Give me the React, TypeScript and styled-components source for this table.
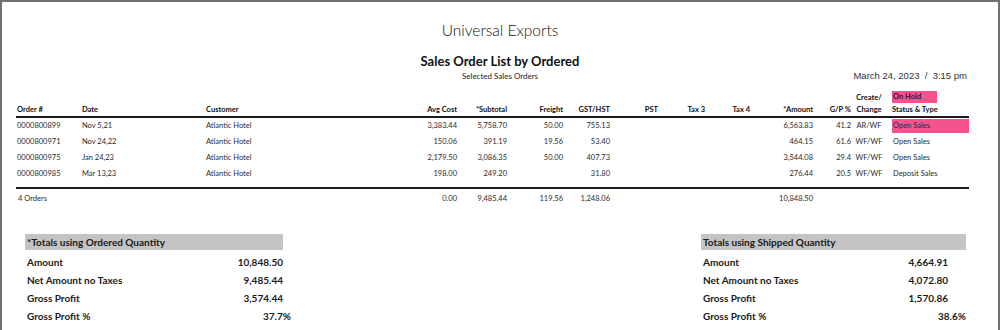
import React from "react";
import styled, { createGlobalStyle } from "styled-components";

const GlobalStyle = createGlobalStyle`
  body {
    margin: 0;
    background: #ffffff;
  }
`;

const Page = styled.div`
  width: 1000px;
  height: 330px;
  box-sizing: border-box;
  border: 2px solid #6f6f6f;
  border-bottom: none;
  background: #ffffff;
  font-family: Lato, "Open Sans", sans-serif;
  color: #1e1e1e;
  overflow: hidden;
`;

const Heading = styled.div`
  padding-top: 18px;
  display: flex;
  flex-direction: column;
  align-items: center;
`;

const Company = styled.div`
  font-size: 15.5px;
  font-weight: 300;
  line-height: 20px;
  color: #111;
`;

const ReportTitle = styled.div`
  margin-top: 12px;
  font-size: 13px;
  font-weight: 700;
  line-height: 18px;
  color: #111;
`;

const SubRow = styled.div`
  align-self: stretch;
  display: grid;
  grid-template-columns: 1fr auto 1fr;
  align-items: center;
  line-height: 12px;
`;

const Subtitle = styled.div`
  font-size: 8px;
  color: #222;
`;

const Stamp = styled.div`
  justify-self: end;
  padding-right: 31px;
  font-family: "Liberation Sans", Arial, sans-serif;
  font-size: 9.5px;
  white-space: pre;
  color: #333;
`;

const Table = styled.div`
  margin: 8px 0 0 14px;
  width: 953px;
`;

const Row = styled.div<{ $kind: "head" | "body" | "total" }>`
  display: grid;
  grid-template-columns: 66px 124px 201px 50px 50px 56px 47px 48px 47px 45px 63px 38px 41px 77px;
  align-items: ${(p) => (p.$kind === "head" ? "end" : "center")};
  font-size: 7.5px;
  font-weight: ${(p) => (p.$kind === "head" ? 700 : 400)};
  line-height: ${(p) => (p.$kind === "head" ? "12px" : "16px")};
  height: ${(p) => (p.$kind === "head" ? "26px" : "16px")};
  color: ${(p) => (p.$kind === "head" ? "#111" : "#2a2a2a")};
  border-bottom: ${(p) => (p.$kind === "head" ? "2px solid #1a1a1a" : "none")};
  margin-top: ${(p) => (p.$kind === "total" ? "2px" : "0")};
`;

const Body = styled.div`
  padding-bottom: 5px;
  border-bottom: 2px solid #1a1a1a;
`;

const Cell = styled.div<{ $align?: "left" | "right" | "center"; $indent?: number }>`
  text-align: ${(p) => p.$align || "left"};
  padding-left: ${(p) => p.$indent || 0}px;
  white-space: nowrap;
`;

const ChangeCell = styled.div`
  text-align: center;
  padding: 0 8px 0 3px;
  white-space: nowrap;
`;

const StatusCell = styled.div<{ $hold?: boolean }>`
  height: 14px;
  line-height: 14px;
  padding-left: 1px;
  background: ${(p) => (p.$hold ? "#f6528d" : "transparent")};
  white-space: nowrap;
`;

const HoldBadge = styled.div`
  width: 44px;
  height: 12px;
  line-height: 12px;
  margin-bottom: 1px;
  padding-left: 1px;
  background: #f6528d;
  color: #4a0c22;
`;

const Summaries = styled.div`
  display: flex;
  justify-content: space-between;
  margin-top: 27px;
  padding: 0 32px 0 23px;
`;

const SummaryBox = styled.div<{ $width: number }>`
  width: ${(p) => p.$width}px;
`;

const SummaryBar = styled.div`
  height: 16px;
  line-height: 16px;
  padding-left: 2px;
  background: #c4c4c4;
  font-size: 10px;
  font-weight: 700;
  color: #1a1a1a;
`;

const SummaryList = styled.div`
  margin-top: 3px;
`;

const SummaryRow = styled.div<{ $valueEnd: number }>`
  display: grid;
  grid-template-columns: 1fr auto;
  height: 18px;
  line-height: 18px;
  padding-left: 2px;
  padding-right: ${(p) => p.$valueEnd}px;
  font-size: 10px;
  font-weight: 700;
  color: #1a1a1a;
`;

const Value = styled.span<{ $hang?: number }>`
  text-align: right;
  margin-right: ${(p) => -(p.$hang || 0)}px;
`;

type Order = {
  no: string;
  date: string;
  avg: string;
  sub: string;
  freight: string;
  gst: string;
  amount: string;
  gp: string;
  change: string;
  status: string;
  hold?: boolean;
};

const orders: Order[] = [
  { no: "0000800899", date: "Nov 5,21", avg: "3,383.44", sub: "5,758.70", freight: "50.00", gst: "755.13", amount: "6,563.83", gp: "41.2", change: "AR/WF", status: "Open Sales", hold: true },
  { no: "0000800971", date: "Nov 24,22", avg: "150.06", sub: "391.19", freight: "19.56", gst: "53.40", amount: "464.15", gp: "61.6", change: "WF/WF", status: "Open Sales" },
  { no: "0000800975", date: "Jan 24,23", avg: "2,179.50", sub: "3,086.35", freight: "50.00", gst: "407.73", amount: "3,544.08", gp: "29.4", change: "WF/WF", status: "Open Sales" },
  { no: "0000800985", date: "Mar 13,23", avg: "198.00", sub: "249.20", freight: "", gst: "31.80", amount: "276.44", gp: "20.5", change: "WF/WF", status: "Deposit Sales" },
];

type SummaryLine = { label: string; value: string; hang?: number };

const ordered: SummaryLine[] = [
  { label: "Amount", value: "10,848.50" },
  { label: "Net Amount no Taxes", value: "9,485.44" },
  { label: "Gross Profit", value: "3,574.44" },
  { label: "Gross Profit %", value: "37.7%", hang: 8 },
];

const shipped: SummaryLine[] = [
  { label: "Amount", value: "4,664.91" },
  { label: "Net Amount no Taxes", value: "4,072.80" },
  { label: "Gross Profit", value: "1,570.86" },
  { label: "Gross Profit %", value: "38.6%", hang: 18 },
];

const Summary: React.FC<{ title: string; width: number; valueEnd: number; lines: SummaryLine[] }> = ({
  title,
  width,
  valueEnd,
  lines,
}) => (
  <SummaryBox $width={width}>
    <SummaryBar>{title}</SummaryBar>
    <SummaryList>
      {lines.map((l) => (
        <SummaryRow key={l.label} $valueEnd={valueEnd}>
          <span>{l.label}</span>
          <Value $hang={l.hang}>{l.value}</Value>
        </SummaryRow>
      ))}
    </SummaryList>
  </SummaryBox>
);

export default function App() {
  return (
    <>
      <GlobalStyle />
      <Page>
        <Heading>
          <Company>Universal Exports</Company>
          <ReportTitle>Sales Order List by Ordered</ReportTitle>
          <SubRow>
            <span />
            <Subtitle>Selected Sales Orders</Subtitle>
            <Stamp>{"March 24, 2023  /  3:15 pm"}</Stamp>
          </SubRow>
        </Heading>

        <Table>
          <Row $kind="head">
            <Cell $indent={1}>Order #</Cell>
            <Cell>Date</Cell>
            <Cell>Customer</Cell>
            <Cell $align="right">Avg Cost</Cell>
            <Cell $align="right">*Subtotal</Cell>
            <Cell $align="right">Freight</Cell>
            <Cell $align="right">GST/HST</Cell>
            <Cell $align="right">PST</Cell>
            <Cell $align="right">Tax 3</Cell>
            <Cell $align="right">Tax 4</Cell>
            <Cell $align="right">*Amount</Cell>
            <Cell $align="right">G/P %</Cell>
            <ChangeCell>
              Create/
              <br />
              Change
            </ChangeCell>
            <div>
              <HoldBadge>On Hold</HoldBadge>
              <Cell>Status &amp; Type</Cell>
            </div>
          </Row>
          <Body>
            {orders.map((o) => (
              <Row $kind="body" key={o.no}>
                <Cell $indent={1}>{o.no}</Cell>
                <Cell>{o.date}</Cell>
                <Cell>Atlantic Hotel</Cell>
                <Cell $align="right">{o.avg}</Cell>
                <Cell $align="right">{o.sub}</Cell>
                <Cell $align="right">{o.freight}</Cell>
                <Cell $align="right">{o.gst}</Cell>
                <Cell />
                <Cell />
                <Cell />
                <Cell $align="right">{o.amount}</Cell>
                <Cell $align="right">{o.gp}</Cell>
                <ChangeCell>{o.change}</ChangeCell>
                <StatusCell $hold={o.hold}>{o.status}</StatusCell>
              </Row>
            ))}
          </Body>
          <Row $kind="total">
            <Cell $indent={2}>4 Orders</Cell>
            <Cell />
            <Cell />
            <Cell $align="right">0.00</Cell>
            <Cell $align="right">9,485.44</Cell>
            <Cell $align="right">119.56</Cell>
            <Cell $align="right">1,248.06</Cell>
            <Cell />
            <Cell />
            <Cell />
            <Cell $align="right">10,848.50</Cell>
            <Cell />
            <Cell />
            <Cell />
          </Row>
        </Table>

        <Summaries>
          <Summary title="*Totals using Ordered Quantity" width={258} valueEnd={0} lines={ordered} />
          <Summary title="Totals using Shipped Quantity" width={265} valueEnd={18} lines={shipped} />
        </Summaries>
      </Page>
    </>
  );
}
